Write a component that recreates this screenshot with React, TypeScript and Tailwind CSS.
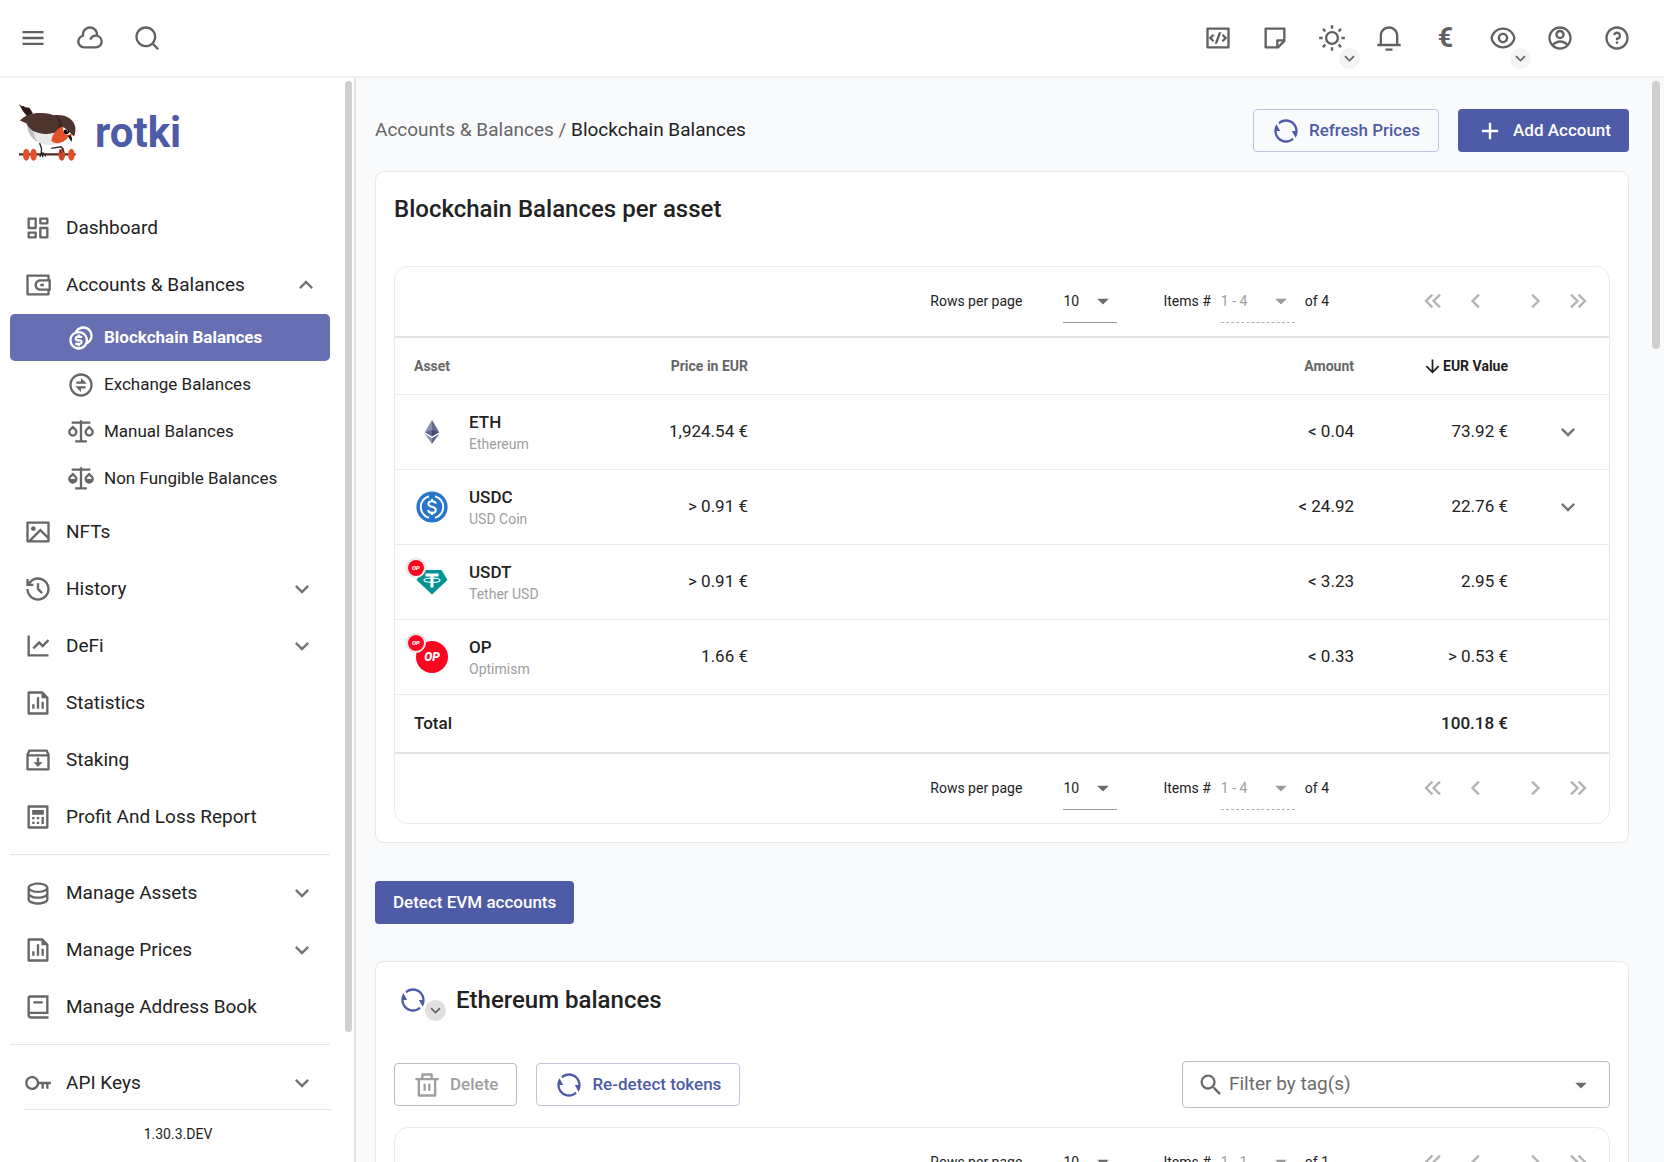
import React from 'react';
import type { ReactNode } from 'react';
import type { IconType } from 'react-icons';
import {
  RiAccountCircleLine,
  RiAddLine,
  RiArrowDownLine,
  RiArrowDownSLine,
  RiBook2Line,
  RiCalculatorLine,
  RiCloudLine,
  RiCodeBoxLine,
  RiCoinsLine,
  RiDashboardLine,
  RiDatabase2Line,
  RiDeleteBinLine,
  RiExchangeLine,
  RiEyeLine,
  RiFileChartLine,
  RiHistoryLine,
  RiImageLine,
  RiInboxArchiveLine,
  RiKeyLine,
  RiLineChartLine,
  RiNotification3Line,
  RiQuestionLine,
  RiRefreshLine,
  RiScalesFill,
  RiScalesLine,
  RiSearchLine,
  RiStickyNoteLine,
  RiSunLine,
  RiWallet3Line,
} from 'react-icons/ri';
import {
  MdArrowDropDown,
  MdKeyboardArrowDown,
  MdKeyboardArrowUp,
  MdMenu,
  MdSearch,
} from 'react-icons/md';

const ICON = 28;

function BirdLogo() {
  return (
    <svg viewBox="57 42 172 172" className="size-[57px]" aria-hidden="true">
      <path d="M57 42 L66 49 L72 48 L75 52 L88 53 L99 70 L82 80 L68 62 Z" fill="#2b1a18" />
      <path d="M80 98 C82 130 96 150 116 158 C140 170 180 168 200 150 L196 100 L120 80 Z" fill="#e9e9ea" />
      <path d="M80 98 C82 128 94 146 112 155 C104 142 100 126 104 112 Z" fill="#bfc0c4" />
      <path d="M60 92 C76 74 100 68 126 69 C142 69 154 72 162 76 C196 72 222 86 227 112 C228 124 226 134 223 140 C216 134 206 122 192 112 C182 114 178 120 172 126 C150 136 118 134 98 122 C88 116 82 106 80 101 Z" fill="#4d342e" />
      <path d="M162 76 C176 82 182 96 172 126 C180 114 186 108 190 108 C186 92 178 80 162 76 Z" fill="#3c2723" />
      <path d="M155 152 C156 138 168 118 188 109 C190 120 192 132 200 135 C208 137 212 132 217 132 L214 142 L206 140 C202 150 184 162 168 160 C162 158 156 156 155 152 Z" fill="#e65227" />
      <ellipse cx="200" cy="126" rx="8" ry="7" fill="#0d0b0c" />
      <circle cx="203" cy="123" r="2" fill="#ffffff" />
      <path d="M204 138 L212 136 L217 144 L216 157 L210 148 Z" fill="#1c1515" />
      <path d="M57 194 H228" stroke="#4d2d27" strokeWidth="7" />
      <path d="M119 160 L125 176 L124 190 M154 176 L184 171 L192 180 M126 188 L120 202 M127 188 L129 203 M128 188 L138 200" stroke="#2b2323" strokeWidth="4" fill="none" />
      <ellipse cx="79" cy="195" rx="10" ry="18" fill="#e0512b" />
      <ellipse cx="101" cy="195" rx="10" ry="18" fill="#e0512b" />
      <ellipse cx="186" cy="195" rx="10" ry="18" fill="#cf4726" />
      <ellipse cx="215" cy="195" rx="10" ry="18" fill="#e0512b" />
      <path d="M180 180 L184 190 M188 178 L193 188" stroke="#2b2323" strokeWidth="3" />
    </svg>
  );
}

function EthIcon() {
  return (
    <svg viewBox="0 0 32 32" className="size-8" aria-hidden="true">
      <path d="M16 4 L8.7 16.3 L16 13.2 Z" fill="#8a92b2" />
      <path d="M16 4 L23.3 16.3 L16 13.2 Z" fill="#62688f" />
      <path d="M8.7 16.3 L16 13.2 V20.6 Z" fill="#62688f" />
      <path d="M23.3 16.3 L16 13.2 V20.6 Z" fill="#454a75" />
      <path d="M8.7 17.8 L16 22.2 V28 Z" fill="#8a92b2" />
      <path d="M23.3 17.8 L16 22.2 V28 Z" fill="#62688f" />
    </svg>
  );
}

function UsdcIcon() {
  return (
    <svg viewBox="0 0 32 32" className="size-8" aria-hidden="true">
      <circle cx="16" cy="16" r="15.6" fill="#2775ca" />
      <path d="M13 5.2 A11.2 11.2 0 0 0 13 26.8 M19 5.2 A11.2 11.2 0 0 1 19 26.8" stroke="#fff" strokeWidth="2" fill="none" />
      <path d="M19.7 12.6 C19.4 10.8 18 10.2 16 10.2 C13.8 10.2 12.4 11.2 12.4 12.9 C12.4 16.9 19.8 14.6 19.8 18.9 C19.8 20.8 18.2 21.8 16 21.8 C13.8 21.8 12.4 20.9 12.1 19 M16 8 V10.4 M16 21.6 V24" stroke="#fff" strokeWidth="2" fill="none" />
    </svg>
  );
}

function UsdtIcon() {
  return (
    <svg viewBox="0 0 32 32" className="size-8" aria-hidden="true">
      <path d="M6.5 4 H25.5 L31.5 14 L16 28.5 L0.5 14 Z" fill="#009393" />
      <path d="M9.4 7.6 H22.6 V10.6 H17.6 V21.6 H14.4 V10.6 H9.4 Z" fill="#fff" />
      <ellipse cx="16" cy="14.2" rx="8" ry="2.2" fill="none" stroke="#fff" strokeWidth="1.2" />
    </svg>
  );
}

function OpIcon() {
  return (
    <span className="flex size-8 items-center justify-center rounded-full bg-[#ff0420] text-[12px] leading-none font-black text-white italic">
      OP
    </span>
  );
}

function OpBadge() {
  return (
    <span className="absolute -top-2 -left-[10px] flex size-5 items-center justify-center rounded-full border border-[#d9d9d9] bg-white">
      <span className="flex size-4 items-center justify-center rounded-full bg-[#ff0420] text-[6px] leading-none font-black text-white italic">
        OP
      </span>
    </span>
  );
}

function HeaderButton({ label, menu, children }: { label: string; menu?: boolean; children: ReactNode }) {
  return (
    <button type="button" aria-label={label} className="relative flex size-[57px] items-center justify-center text-[#616161]">
      {children}
      {menu && (
        <span className="absolute right-0 -bottom-0.5 flex size-[21px] items-center justify-center rounded-full bg-[#f4f4f4]">
          <RiArrowDownSLine size={19} />
        </span>
      )}
    </button>
  );
}

function Header() {
  return (
    <header className="flex h-[78px] shrink-0 items-center justify-between border-b-2 border-[#f0f1f4] bg-white pr-[19px] pl-1">
      <div className="flex">
        <HeaderButton label="Menu"><MdMenu size={ICON} /></HeaderButton>
        <HeaderButton label="Sync"><RiCloudLine size={ICON} /></HeaderButton>
        <HeaderButton label="Search"><RiSearchLine size={ICON} /></HeaderButton>
      </div>
      <div className="flex">
        <HeaderButton label="Developer"><RiCodeBoxLine size={ICON} /></HeaderButton>
        <HeaderButton label="Notes"><RiStickyNoteLine size={ICON} /></HeaderButton>
        <HeaderButton label="Theme" menu><RiSunLine size={ICON} /></HeaderButton>
        <HeaderButton label="Notifications"><RiNotification3Line size={ICON} /></HeaderButton>
        <HeaderButton label="Currency"><span className="text-[27px] leading-none font-bold">€</span></HeaderButton>
        <HeaderButton label="Privacy" menu><RiEyeLine size={ICON} /></HeaderButton>
        <HeaderButton label="Account"><RiAccountCircleLine size={ICON} /></HeaderButton>
        <HeaderButton label="Help"><RiQuestionLine size={ICON} /></HeaderButton>
      </div>
    </header>
  );
}

function NavItem({ icon: Icon, label, toggle }: { icon: IconType; label: string; toggle?: 'open' | 'closed' }) {
  return (
    <a href="#" className="flex h-[57px] items-center px-[14px] text-[19px] text-[#222]">
      <Icon size={ICON} className="mr-[14px] shrink-0 text-[#666]" />
      <span className="flex-1 pt-0.5">{label}</span>
      {toggle === 'closed' && <MdKeyboardArrowDown size={ICON} className="text-[#757575]" />}
      {toggle === 'open' && <MdKeyboardArrowUp size={ICON} className="-mr-1 text-[#757575]" />}
    </a>
  );
}

function SubItem({ icon: Icon, label, active }: { icon: IconType; label: string; active?: boolean }) {
  return (
    <a
      href="#"
      className={
        active
          ? 'flex h-[47px] items-center rounded-[5px] bg-[#666fb1] pl-[57px] text-[17px] font-bold text-white'
          : 'flex h-[47px] items-center rounded-[5px] pl-[57px] text-[17px] text-[#222]'
      }
    >
      <Icon size={ICON} className={active ? 'mr-[9px] text-white' : 'mr-[9px] text-[#666]'} />
      {label}
    </a>
  );
}

function Sidebar() {
  return (
    <aside className="relative flex w-[356px] shrink-0 flex-col overflow-hidden border-r-2 border-[#e3e3e6] bg-white pr-6 pl-[10px]">
      <div className="flex shrink-0 items-center gap-[19px] pt-[26px] pb-[38px] pl-[9px]">
        <BirdLogo />
        <span className="text-[42px] leading-[57px] font-bold text-[#4e5ba6]">rotki</span>
      </div>
      <nav className="shrink-0">
        <NavItem icon={RiDashboardLine} label="Dashboard" />
        <NavItem icon={RiWallet3Line} label="Accounts & Balances" toggle="open" />
        <div className="py-px">
          <SubItem icon={RiCoinsLine} label="Blockchain Balances" active />
          <SubItem icon={RiExchangeLine} label="Exchange Balances" />
          <SubItem icon={RiScalesLine} label="Manual Balances" />
          <SubItem icon={RiScalesFill} label="Non Fungible Balances" />
        </div>
        <NavItem icon={RiImageLine} label="NFTs" />
        <NavItem icon={RiHistoryLine} label="History" toggle="closed" />
        <NavItem icon={RiLineChartLine} label="DeFi" toggle="closed" />
        <NavItem icon={RiFileChartLine} label="Statistics" />
        <NavItem icon={RiInboxArchiveLine} label="Staking" />
        <NavItem icon={RiCalculatorLine} label="Profit And Loss Report" />
        <hr className="my-[9px] border-[#e6e6e6]" />
        <NavItem icon={RiDatabase2Line} label="Manage Assets" toggle="closed" />
        <NavItem icon={RiFileChartLine} label="Manage Prices" toggle="closed" />
        <NavItem icon={RiBook2Line} label="Manage Address Book" />
        <hr className="my-[9px] border-[#e6e6e6]" />
        <NavItem icon={RiKeyLine} label="API Keys" toggle="closed" />
      </nav>
      <div className="absolute bottom-0 left-6 flex h-[53px] w-[308px] items-center justify-center border-t border-[#e6e6e6] bg-white pb-1 text-sm text-[#222]">
        1.30.3.DEV
      </div>
      <div className="absolute top-[3px] right-[2px] h-[951px] w-[7px] rounded-full bg-[#d0d0d0]" />
    </aside>
  );
}

function PrimaryButton({ children }: { children: ReactNode }) {
  return (
    <button type="button" className="flex h-[43px] items-center rounded bg-[#4e5ba6] px-[18px] text-[17px] font-medium text-white">
      {children}
    </button>
  );
}

function OutlineButton({ children, disabled }: { children: ReactNode; disabled?: boolean }) {
  return (
    <button
      type="button"
      disabled={disabled}
      className={
        disabled
          ? 'flex h-[43px] items-center gap-[9px] rounded border border-[#bdbdbd] px-[18px] text-[17px] font-medium text-[#9e9e9e]'
          : 'flex h-[43px] items-center gap-[9px] rounded border border-[#bfc3e0] px-[18px] text-[17px] font-medium text-[#4e5ba6]'
      }
    >
      {children}
    </button>
  );
}

function DoubleChevron({ className }: { className?: string }) {
  return (
    <svg viewBox="0 0 24 24" width={ICON} height={ICON} className={className} fill="none" stroke="currentColor" strokeWidth="2" aria-hidden="true">
      <path d="M11.5 6.5 L6 12 L11.5 17.5 M18 6.5 L12.5 12 L18 17.5" />
    </svg>
  );
}

function SingleChevron({ className }: { className?: string }) {
  return (
    <svg viewBox="0 0 24 24" width={ICON} height={ICON} className={className} fill="none" stroke="currentColor" strokeWidth="2" aria-hidden="true">
      <path d="M14.5 6.5 L9 12 L14.5 17.5" />
    </svg>
  );
}

function Pagination({ id, range, total }: { id: string; range: string; total: number }) {
  return (
    <div className="flex h-[69px] items-center justify-end pr-[17px] pb-[2px] text-sm text-[#222]">
      <label htmlFor={`${id}-rows`} className="mr-[41px]">Rows per page</label>
      <span className="relative mt-1 mr-[46px] flex w-[54px] border-b border-[#9a9a9a]">
        <select id={`${id}-rows`} className="h-10 w-full appearance-none bg-transparent pb-[3px] outline-none">
          <option>10</option>
        </select>
        <MdArrowDropDown size={ICON} className="pointer-events-none absolute top-[5px] right-0 text-[#6b6b6b]" />
      </span>
      <label htmlFor={`${id}-items`} className="mr-[10px]">Items #</label>
      <span className="relative mt-1 mr-[10px] flex w-[74px] border-b border-dashed border-[#b0b0b0]">
        <select id={`${id}-items`} disabled className="h-10 w-full appearance-none bg-transparent pb-[3px] text-[#9e9e9e] opacity-100 outline-none">
          <option>{range}</option>
        </select>
        <MdArrowDropDown size={ICON} className="pointer-events-none absolute top-[5px] right-0 text-[#9a9a9a]" />
      </span>
      <span className="mr-[90px]">of {total}</span>
      <div className="flex items-center text-[#b3b3b3]">
        <button type="button" disabled aria-label="First page" className="mr-[15px]"><DoubleChevron /></button>
        <button type="button" disabled aria-label="Previous page" className="mr-[31px]"><SingleChevron /></button>
        <button type="button" disabled aria-label="Next page" className="mr-[15px]"><SingleChevron className="rotate-180" /></button>
        <button type="button" disabled aria-label="Last page"><DoubleChevron className="rotate-180" /></button>
      </div>
    </div>
  );
}

type Asset = {
  symbol: string;
  name: string;
  price: string;
  amount: string;
  value: string;
  icon: ReactNode;
  badge?: boolean;
  expandable?: boolean;
};

const assets: Asset[] = [
  { symbol: 'ETH', name: 'Ethereum', price: '1,924.54 €', amount: '< 0.04', value: '73.92 €', icon: <EthIcon />, expandable: true },
  { symbol: 'USDC', name: 'USD Coin', price: '> 0.91 €', amount: '< 24.92', value: '22.76 €', icon: <UsdcIcon />, expandable: true },
  { symbol: 'USDT', name: 'Tether USD', price: '> 0.91 €', amount: '< 3.23', value: '2.95 €', icon: <UsdtIcon />, badge: true },
  { symbol: 'OP', name: 'Optimism', price: '1.66 €', amount: '< 0.33', value: '> 0.53 €', icon: <OpIcon />, badge: true },
];

function AssetTable() {
  return (
    <div className="rounded-[14px] border border-[#ebebeb]">
      <Pagination id="assets-top" range="1 - 4" total={4} />
      <table className="w-full table-fixed border-separate border-spacing-0 border-y-2 border-[#e4e4e6] text-[17px] text-[#222]">
        <colgroup>
          <col className="w-[202px]" />
          <col className="w-[170px]" />
          <col />
          <col className="w-[154px]" />
          <col className="w-[82px]" />
        </colgroup>
        <thead>
          <tr className="text-sm text-[#666]">
            <th className="h-[57px] border-b border-[#ebebeb] px-[19px] text-left font-bold">Asset</th>
            <th className="border-b border-[#ebebeb] px-[19px] text-right font-bold">Price in EUR</th>
            <th className="border-b border-[#ebebeb] px-[19px] text-right font-bold">Amount</th>
            <th className="border-b border-[#ebebeb] px-[19px] font-bold text-[#222]">
              <span className="flex items-center justify-end">
                <RiArrowDownLine size={21} />
                EUR Value
              </span>
            </th>
            <th className="border-b border-[#ebebeb]" aria-label="Expand" />
          </tr>
        </thead>
        <tbody>
          {assets.map((a) => (
            <tr key={a.symbol}>
              <td className="h-[75px] border-b border-[#ebebeb] px-[19px]">
                <div className="flex items-center gap-[21px]">
                  <span className="relative ml-[2px]">
                    {a.icon}
                    {a.badge && <OpBadge />}
                  </span>
                  <div>
                    <div className="leading-6 font-medium">{a.symbol}</div>
                    <div className="text-sm text-[#9e9e9e]">{a.name}</div>
                  </div>
                </div>
              </td>
              <td className="border-b border-[#ebebeb] px-[19px] text-right">{a.price}</td>
              <td className="border-b border-[#ebebeb] px-[19px] text-right">{a.amount}</td>
              <td className="border-b border-[#ebebeb] px-[19px] text-right">{a.value}</td>
              <td className="border-b border-[#ebebeb]">
                {a.expandable && (
                  <button type="button" aria-label={`Expand ${a.symbol}`} className="mx-auto flex text-[#757575]">
                    <MdKeyboardArrowDown size={ICON} />
                  </button>
                )}
              </td>
            </tr>
          ))}
          <tr className="font-medium">
            <td className="h-[57px] px-[19px]">Total</td>
            <td />
            <td />
            <td className="px-[19px] text-right">100.18 €</td>
            <td />
          </tr>
        </tbody>
      </table>
      <Pagination id="assets-bottom" range="1 - 4" total={4} />
    </div>
  );
}

function Main() {
  return (
    <main className="relative flex-1 overflow-hidden bg-[#f9fafc] pt-[31px] pr-[35px] pl-[19px]">
      <div className="flex items-center justify-between">
        <nav aria-label="Breadcrumb" className="text-[19px] text-[#666]">
          <a href="#">Accounts &amp; Balances</a> / <span className="text-[#222]">Blockchain Balances</span>
        </nav>
        <div className="flex gap-[19px]">
          <OutlineButton><RiRefreshLine size={ICON} />Refresh Prices</OutlineButton>
          <PrimaryButton><RiAddLine size={ICON} className="mr-[9px]" />Add Account</PrimaryButton>
        </div>
      </div>

      <section className="mt-[19px] rounded-[9px] border border-[#e6e7ea] bg-white px-[18px] pt-[19px] pb-[18px]">
        <h2 className="mb-[39px] text-2xl leading-9 font-medium text-[#222]">Blockchain Balances per asset</h2>
        <AssetTable />
      </section>

      <div className="mt-[38px] mb-[37px] flex">
        <PrimaryButton>Detect EVM accounts</PrimaryButton>
      </div>

      <section className="rounded-[9px] border border-[#e6e7ea] bg-white px-[18px] pt-5 pb-[19px]">
        <div className="mb-[43px] flex items-center">
          <button type="button" aria-label="Refresh" className="relative mr-[29px] ml-[5px] text-[#4e5ba6]">
            <RiRefreshLine size={ICON} />
            <span className="absolute -right-[19px] -bottom-[7px] flex size-[21px] items-center justify-center rounded-full bg-[#e0e0e0] text-[#616161]">
              <RiArrowDownSLine size={19} />
            </span>
          </button>
          <h2 className="text-2xl leading-9 font-medium text-[#222]">Ethereum balances</h2>
        </div>
        <div className="mb-[19px] flex items-center gap-[19px]">
          <OutlineButton disabled><RiDeleteBinLine size={ICON} />Delete</OutlineButton>
          <OutlineButton><RiRefreshLine size={ICON} />Re-detect tokens</OutlineButton>
          <label className="ml-auto flex h-[47px] w-[428px] items-center rounded border border-[#bcbcbc] px-[14px] text-[#6b6b6b]">
            <MdSearch size={ICON} />
            <input
              type="text"
              aria-label="Filter by tag(s)"
              placeholder="Filter by tag(s)"
              className="ml-1 min-w-0 flex-1 bg-transparent text-[19px] outline-none placeholder:text-[#6b6b6b]"
            />
            <MdArrowDropDown size={ICON} />
          </label>
        </div>
        <div className="rounded-[14px] border border-[#ebebeb]">
          <Pagination id="ethereum-top" range="1 - 1" total={1} />
        </div>
      </section>

      <div className="absolute top-[3px] right-1 h-[268px] w-[8px] rounded-full bg-[#d0d0d0]" />
    </main>
  );
}

export default function App() {
  return (
    <div className="flex h-screen flex-col overflow-hidden bg-white font-[Roboto,sans-serif]">
      <Header />
      <div className="flex min-h-0 flex-1">
        <Sidebar />
        <Main />
      </div>
    </div>
  );
}
